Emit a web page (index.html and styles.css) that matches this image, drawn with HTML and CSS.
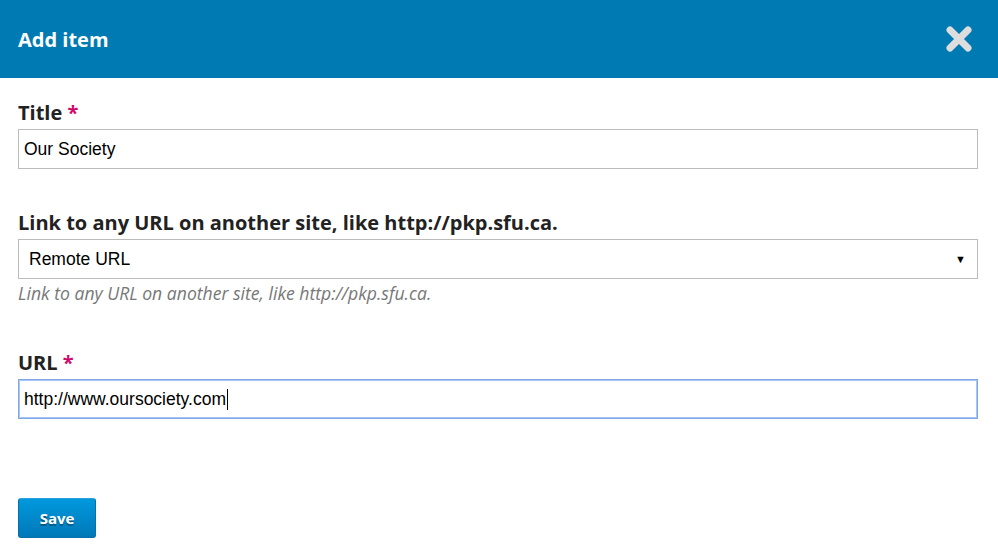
FILE: index.html
```html
<!DOCTYPE html>
<html>
<head>
<meta charset="utf-8">
<link rel="stylesheet" href="styles.css">
</head>
<body>
<div class="modal">
  <div class="header">
    <h1 class="title">Add item</h1>
    <button class="close" aria-label="Close">
      <svg width="28" height="28" viewBox="0 0 28 28"><path d="M5 5 L23 23 M23 5 L5 23" stroke="#dddddd" stroke-width="7" stroke-linecap="round"/></svg>
    </button>
  </div>
  <form class="form">
    <div class="field">
      <label class="label">Title <span class="req">*</span></label>
      <div class="input">Our Society</div>
    </div>
    <div class="field field-help">
      <label class="label">Link to any URL on another site, like http://pkp.sfu.ca.</label>
      <div class="select"><span>Remote URL</span><span class="arrow">▼</span></div>
      <div class="help">Link to any URL on another site, like http://pkp.sfu.ca.</div>
    </div>
    <div class="field">
      <label class="label">URL <span class="req">*</span></label>
      <div class="input focus">http://www.oursociety.com<span class="caret"></span></div>
    </div>
    <div class="buttons">
      <button type="button" class="save">Save</button>
    </div>
  </form>
</div>
</body>
</html>
```
FILE: styles.css
```css
html, body { margin: 0; padding: 0; background: #fff; }
body { font-family: "Open Sans", "Noto Sans", sans-serif; color: #222; }
.header {
  background: #007ab2;
  height: 78px;
  display: flex;
  align-items: center;
  justify-content: space-between;
  padding: 0 25px 0 18px;
}
.title { margin: 0; color: #fff; font-size: 20px; font-weight: 700; }
.close { background: none; border: 0; padding: 0; width: 28px; height: 28px; display: flex; }
.form { padding: 22px 20px 0 18px; }
.field { margin-bottom: 41px; }
.field-help { margin-bottom: 45px; }
.label { display: block; font-size: 20px; font-weight: 700; line-height: 26px; margin-bottom: 3px; color: #222; }
.req { color: #d00a6c; }
.input, .select {
  height: 40px; box-sizing: border-box;
  border: 1px solid #bbb;
  font-family: "Liberation Sans", Arial, sans-serif; font-size: 17.5px; color: #000;
  display: flex; align-items: center; padding: 0 5px;
}
.select { padding: 0 11px 0 10px; justify-content: space-between; }
.arrow { font-size: 11px; }
.input.focus { border-color: #7fa8e8; box-shadow: 0 0 0 1px #a9c4f0 inset; }
.caret { display: inline-block; width: 1px; height: 21px; background: #000; margin-left: 1px; }
.help { font-style: italic; color: #777; font-size: 17.6px; margin-top: 2px; line-height: 24px; }
.buttons { padding-top: 38px; }
.save {
  width: 78px; height: 40px;
  border: 1px solid #0a6ea8; border-top-color: #2aa0dc; border-radius: 3px;
  background: linear-gradient(#0099dd, #0078b8);
  color: #fff; font-family: "Open Sans", sans-serif; font-weight: 700; font-size: 15px;
  text-shadow: 0 2px 0 #005a88;
}
```
